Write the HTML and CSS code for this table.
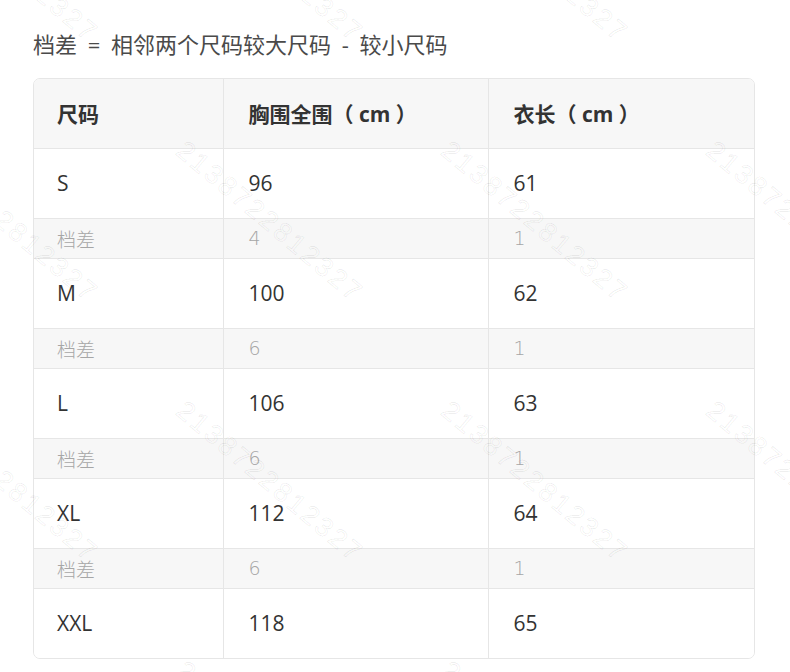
FILE: index.html
```html
<!DOCTYPE html>
<html lang="zh-CN">
<head>
<meta charset="utf-8">
<link rel="stylesheet" href="styles.css">
</head>
<body>
<div class="page">
  <p class="note">档差 = 相邻两个尺码较大尺码 - 较小尺码</p>
  <div class="table-wrap">
    <table class="size-table">
      <colgroup>
        <col class="c1"><col class="c2"><col class="c3">
      </colgroup>
      <thead>
        <tr><th>尺码</th><th>胸围全围（ cm ）</th><th>衣长（ cm ）</th></tr>
      </thead>
      <tbody>
        <tr class="size"><td>S</td><td>96</td><td>61</td></tr>
        <tr class="diff"><td>档差</td><td>4</td><td>1</td></tr>
        <tr class="size"><td>M</td><td>100</td><td>62</td></tr>
        <tr class="diff"><td>档差</td><td>6</td><td>1</td></tr>
        <tr class="size"><td>L</td><td>106</td><td>63</td></tr>
        <tr class="diff"><td>档差</td><td>6</td><td>1</td></tr>
        <tr class="size"><td>XL</td><td>112</td><td>64</td></tr>
        <tr class="diff"><td>档差</td><td>6</td><td>1</td></tr>
        <tr class="size"><td>XXL</td><td>118</td><td>65</td></tr>
      </tbody>
    </table>
  </div>
  <div class="watermarks" aria-hidden="true">
    <span class="wm" style="left:-75px;top:-125px">2138722812327</span>
    <span class="wm" style="left:190px;top:-125px">2138722812327</span>
    <span class="wm" style="left:455px;top:-125px">2138722812327</span>
    <span class="wm" style="left:720px;top:-125px">2138722812327</span>
    <span class="wm" style="left:-75px;top:135px">2138722812327</span>
    <span class="wm" style="left:190px;top:135px">2138722812327</span>
    <span class="wm" style="left:455px;top:135px">2138722812327</span>
    <span class="wm" style="left:720px;top:135px">2138722812327</span>
    <span class="wm" style="left:-75px;top:395px">2138722812327</span>
    <span class="wm" style="left:190px;top:395px">2138722812327</span>
    <span class="wm" style="left:455px;top:395px">2138722812327</span>
    <span class="wm" style="left:720px;top:395px">2138722812327</span>
    <span class="wm" style="left:-75px;top:655px">2138722812327</span>
    <span class="wm" style="left:190px;top:655px">2138722812327</span>
    <span class="wm" style="left:455px;top:655px">2138722812327</span>
  </div>
</div>
</body>
</html>
```
FILE: styles.css
```css
html, body {
  margin: 0;
  padding: 0;
  background: #ffffff;
}
body {
  font-family: "Open Sans", "Noto Sans CJK SC", sans-serif;
  color: #333333;
}
.page {
  position: relative;
  width: 790px;
  height: 672px;
  overflow: hidden;
  padding: 0 35px 0 33px;
  box-sizing: border-box;
}
.note {
  margin: 0;
  padding-top: 29px;
  height: 78px;
  box-sizing: border-box;
  font-size: 22px;
  line-height: 30px;
  word-spacing: 5px;
  color: #4a4a4a;
}
.table-wrap {
  width: 722px;
  border: 1px solid #e6e6e6;
  border-radius: 7px;
  overflow: hidden;
  box-sizing: border-box;
}
.size-table {
  width: 100%;
  border-collapse: collapse;
  table-layout: fixed;
  font-size: 21px;
}
.c1 { width: 189px; }
.c2 { width: 265px; }
.c3 { width: auto; }
.size-table th,
.size-table td {
  text-align: left;
  padding: 0 0 0 25px;
  border-left: 1px solid #e6e6e6;
  border-top: 1px solid #e6e6e6;
  box-sizing: border-box;
  white-space: nowrap;
}
.size-table th:first-child,
.size-table td:first-child {
  border-left: none;
  padding-left: 23px;
}
.size-table thead th {
  border-top: none;
  height: 69px;
  background: #f7f7f7;
  font-weight: 700;
  color: #333333;
}
.size-table .size td {
  height: 70px;
  color: #333333;
  background: #ffffff;
}
.size-table .diff td {
  height: 40px;
  color: #a6a6a6;
  background: #f7f7f7;
  font-family: "DejaVu Sans", "Noto Sans CJK SC", sans-serif;
  font-size: 19px;
  font-weight: 300;
}
.watermarks {
  position: absolute;
  inset: 0;
  pointer-events: none;
}
.wm {
  position: absolute;
  transform-origin: left top;
  transform: rotate(40deg);
  font-family: "Liberation Sans", sans-serif;
  font-size: 27px;
  letter-spacing: 3px;
  color: rgba(0, 0, 0, 0.02);
  -webkit-text-stroke: 0.8px rgba(0, 0, 0, 0.08);
  white-space: nowrap;
}
```
